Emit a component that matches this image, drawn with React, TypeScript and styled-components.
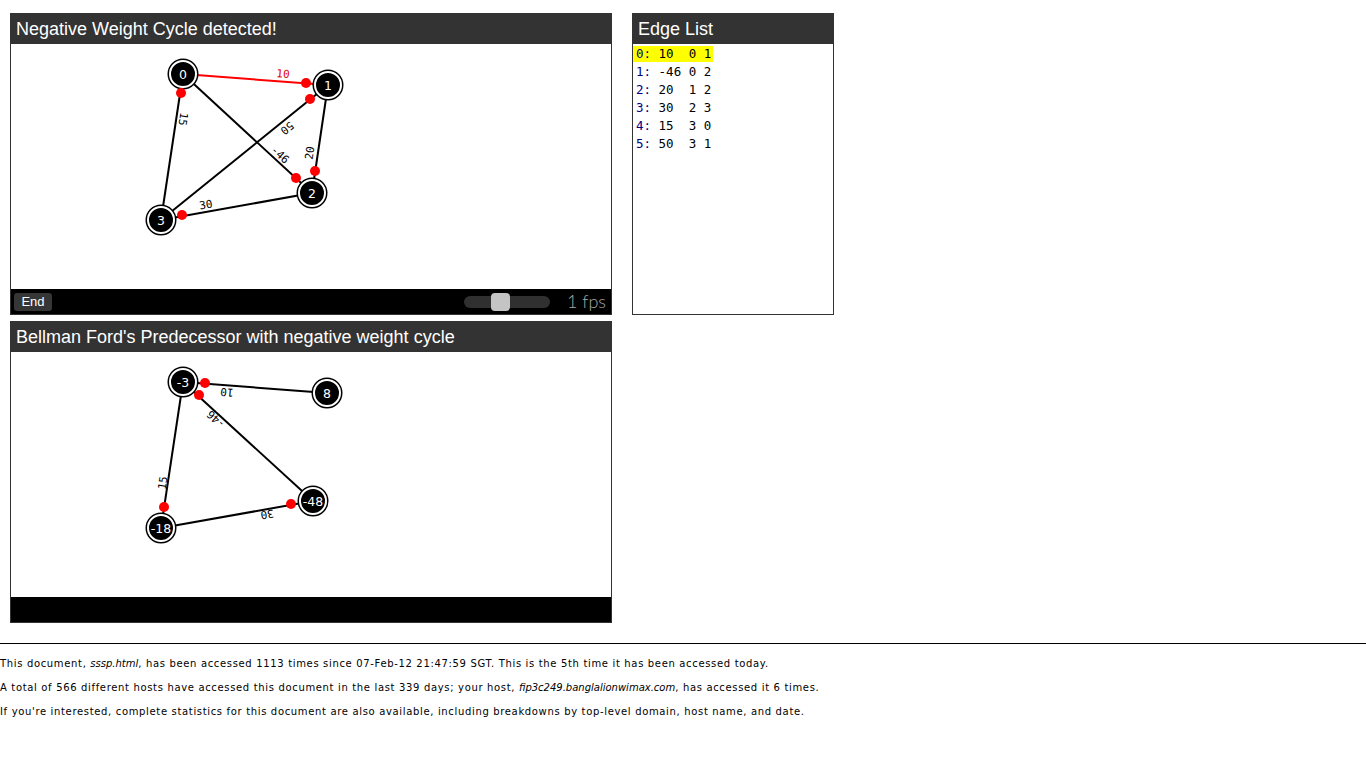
import React from 'react';
import styled, { createGlobalStyle } from 'styled-components';

const GlobalStyle = createGlobalStyle`
	body {
		margin: 0;
		background: #ffffff;
		font-family: "Liberation Sans", Arial, sans-serif;
	}
`;

const Top = styled.div`
	display: flex;
	align-items: flex-start;
	gap: 20px;
	padding: 13px 0 0 10px;
`;

const Column = styled.div`
	display: flex;
	flex-direction: column;
	gap: 6px;
`;

const Panel = styled.div<{ $width: number }>`
	width: ${(p) => p.$width}px;
	border: 1px solid #333333;
	border-top: none;
	background: #ffffff;
	display: flex;
	flex-direction: column;
`;

const Header = styled.div`
	height: 29px;
	padding: 2px 0 0 6px;
	margin: 0 -1px;
	background: #333333;
	color: #ffffff;
	font-family: "Liberation Sans", Arial, sans-serif;
	font-size: 18px;
	line-height: 29px;
`;

const Canvas = styled.svg`
	display: block;
	width: 600px;
	height: 245px;
`;

const ControlBar = styled.div`
	height: 25px;
	background: #000000;
	display: flex;
	align-items: center;
	justify-content: space-between;
	padding: 0 5px 0 3px;
`;

const EndButton = styled.button`
	height: 18px;
	width: 38px;
	padding: 0;
	border: none;
	border-radius: 3px;
	background: #363636;
	color: #ffffff;
	font-family: "Liberation Sans", Arial, sans-serif;
	font-size: 13px;
	line-height: 18px;
`;

const SpeedBox = styled.div`
	display: flex;
	align-items: center;
	gap: 17px;
`;

const Track = styled.div`
	position: relative;
	width: 86px;
	height: 12px;
	border-radius: 6px;
	background: #303030;
`;

const Thumb = styled.div`
	position: absolute;
	left: 27px;
	top: -3px;
	width: 19px;
	height: 18px;
	border-radius: 4px;
	background: #c4c4c4;
`;

const Fps = styled.span`
	color: #a8a8a8;
	font-family: Lato, "Open Sans", sans-serif;
	font-weight: 300;
	font-size: 18px;
	line-height: 25px;
`;

const EdgeBody = styled.div`
	height: 270px;
`;

const EdgeRow = styled.div`
	height: 18px;
`;

const Entry = styled.span<{ $active?: boolean }>`
	display: inline-block;
	height: 16px;
	line-height: 15px;
	padding: 0 2px 0 3px;
	background: ${(p) => (p.$active ? '#ffff00' : 'transparent')};
	font-family: "DejaVu Sans Mono", "Liberation Mono", monospace;
	font-size: 12.5px;
	white-space: pre;
	color: #000000;
`;

const Index = styled.span`
	color: #000080;
`;

const Footer = styled.div`
	margin-top: 20px;
	border-top: 1px solid #000000;
	padding-top: 8px;
`;

const Note = styled.p`
	margin: 0;
	font-family: "DejaVu Sans", Verdana, sans-serif;
	font-size: 10px;
	letter-spacing: 0.66px;
	line-height: 24px;
	color: #000000;
`;

const Name = styled.i`
	letter-spacing: 0;
`;

type Node = { x: number; y: number; label: string };
type Edge = { a: number; b: number; red?: boolean };
type Label = { x: number; y: number; rot: number; text: string; red?: boolean };
type Dot = { x: number; y: number };

type Graph = { nodes: Node[]; edges: Edge[]; labels: Label[]; dots: Dot[] };

const detected: Graph = {
	nodes: [
		{ x: 172, y: 30, label: '0' },
		{ x: 317, y: 41, label: '1' },
		{ x: 301, y: 149, label: '2' },
		{ x: 150, y: 176, label: '3' },
	],
	edges: [
		{ a: 0, b: 2 },
		{ a: 1, b: 2 },
		{ a: 2, b: 3 },
		{ a: 3, b: 0 },
		{ a: 3, b: 1 },
		{ a: 0, b: 1, red: true },
	],
	labels: [
		{ x: 272, y: 30, rot: 5, text: '10', red: true },
		{ x: 172, y: 75, rot: 99, text: '15' },
		{ x: 276, y: 84, rot: 141, text: '50' },
		{ x: 269, y: 111, rot: 43, text: '-46' },
		{ x: 299, y: 109, rot: -82, text: '20' },
		{ x: 195, y: 161, rot: -10, text: '30' },
	],
	dots: [
		{ x: 295, y: 39 },
		{ x: 299, y: 55 },
		{ x: 170, y: 49 },
		{ x: 285, y: 134 },
		{ x: 304, y: 127 },
		{ x: 171, y: 171 },
	],
};

const predecessor: Graph = {
	nodes: [
		{ x: 172, y: 30, label: '-3' },
		{ x: 316, y: 41, label: '8' },
		{ x: 302, y: 149, label: '-48' },
		{ x: 150, y: 176, label: '-18' },
	],
	edges: [
		{ a: 0, b: 1 },
		{ a: 2, b: 0 },
		{ a: 0, b: 3 },
		{ a: 3, b: 2 },
	],
	labels: [
		{ x: 216, y: 40, rot: 185, text: '10' },
		{ x: 205, y: 67, rot: 223, text: '-46' },
		{ x: 152, y: 131, rot: -81, text: '15' },
		{ x: 256, y: 162, rot: 170, text: '30' },
	],
	dots: [
		{ x: 194, y: 31 },
		{ x: 188, y: 43 },
		{ x: 153, y: 155 },
		{ x: 280, y: 152 },
	],
};

const GraphView = ({ graph }: { graph: Graph }) => (
	<Canvas viewBox="0 0 600 245">
		{graph.edges.map((e, i) => {
			const a = graph.nodes[e.a];
			const b = graph.nodes[e.b];
			return (
				<line
					key={i}
					x1={a.x}
					y1={a.y}
					x2={b.x}
					y2={b.y}
					stroke={e.red ? '#ff0000' : '#000000'}
					strokeWidth={2}
				/>
			);
		})}
		{graph.labels.map((l, i) => (
			<text
				key={i}
				x={l.x}
				y={l.y}
				transform={`rotate(${l.rot} ${l.x} ${l.y})`}
				textAnchor="middle"
				dominantBaseline="central"
				fontFamily='"DejaVu Sans Mono", monospace'
				fontSize={11}
				fill={l.red ? '#e00000' : '#000000'}
			>
				{l.text}
			</text>
		))}
		{graph.nodes.map((n, i) => (
			<g key={i}>
				<circle cx={n.x} cy={n.y} r={15.5} fill="#000000" />
				<circle cx={n.x} cy={n.y} r={13} fill="none" stroke="#ffffff" strokeWidth={2} />
				<text
					x={n.x}
					y={n.y}
					textAnchor="middle"
					dominantBaseline="central"
					fontFamily='"DejaVu Sans", Verdana, sans-serif'
					fontSize={12.5}
					fill="#ffffff"
				>
					{n.label}
				</text>
			</g>
		))}
		{graph.dots.map((d, i) => (
			<circle key={i} cx={d.x} cy={d.y} r={5} fill="#ff0000" />
		))}
	</Canvas>
);

const edgeList = [
	{ idx: '0:', rest: ' 10  0 1' },
	{ idx: '1:', rest: ' -46 0 2' },
	{ idx: '2:', rest: ' 20  1 2' },
	{ idx: '3:', rest: ' 30  2 3' },
	{ idx: '4:', rest: ' 15  3 0' },
	{ idx: '5:', rest: ' 50  3 1' },
];

const App = () => (
	<>
		<GlobalStyle />
		<Top>
			<Column>
				<Panel $width={600}>
					<Header>Negative Weight Cycle detected!</Header>
					<GraphView graph={detected} />
					<ControlBar>
						<EndButton>End</EndButton>
						<SpeedBox>
							<Track>
								<Thumb />
							</Track>
							<Fps>1 fps</Fps>
						</SpeedBox>
					</ControlBar>
				</Panel>
				<Panel $width={600}>
					<Header>Bellman Ford's Predecessor with negative weight cycle</Header>
					<GraphView graph={predecessor} />
					<ControlBar />
				</Panel>
			</Column>
			<Panel $width={200}>
				<Header>Edge List</Header>
				<EdgeBody>
					{edgeList.map((r, i) => (
						<EdgeRow key={i}>
							<Entry $active={i === 0}>
								<Index>{r.idx}</Index>
								{r.rest}
							</Entry>
						</EdgeRow>
					))}
				</EdgeBody>
			</Panel>
		</Top>
		<Footer>
			<Note>
				This document, <Name>sssp.html</Name>, has been accessed 1113 times since 07-Feb-12 21:47:59 SGT. This is the 5th time it has been accessed today.
			</Note>
			<Note>
				A total of 566 different hosts have accessed this document in the last 339 days; your host, <Name>fip3c249.banglalionwimax.com</Name>, has accessed it 6 times.
			</Note>
			<Note>
				If you're interested, complete statistics for this document are also available, including breakdowns by top-level domain, host name, and date.
			</Note>
		</Footer>
	</>
);

export default App;
